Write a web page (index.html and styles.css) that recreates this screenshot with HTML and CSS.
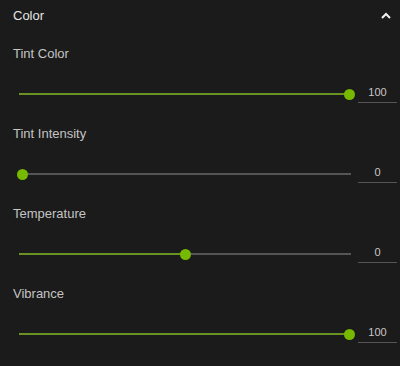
FILE: index.html
```html
<!DOCTYPE html>
<html lang="en">
<head>
    <meta charset="UTF-8">
    <title>Color</title>
    <link rel="stylesheet" href="styles.css">
</head>
<body>
    <div class="panel">
        <div class="panel-header">
            <span class="panel-title">Color</span>
            <svg class="chevron" width="10" height="7" viewBox="0 0 10 7">
                <polyline points="1,6 5,2 9,6" fill="none" stroke="#f0f0f0" stroke-width="2"/>
            </svg>
        </div>

        <div class="setting">
            <div class="label">Tint Color</div>
            <div class="slider-row">
                <div class="track"><div class="rail" style="--v: 100%"><div class="fill"></div><div class="thumb"></div></div></div>
                <div class="value">100</div>
            </div>
        </div>

        <div class="setting">
            <div class="label">Tint Intensity</div>
            <div class="slider-row">
                <div class="track"><div class="rail" style="--v: 0%"><div class="fill"></div><div class="thumb"></div></div></div>
                <div class="value">0</div>
            </div>
        </div>

        <div class="setting">
            <div class="label">Temperature</div>
            <div class="slider-row">
                <div class="track"><div class="rail" style="--v: 50%"><div class="fill"></div><div class="thumb"></div></div></div>
                <div class="value">0</div>
            </div>
        </div>

        <div class="setting">
            <div class="label">Vibrance</div>
            <div class="slider-row">
                <div class="track"><div class="rail" style="--v: 100%"><div class="fill"></div><div class="thumb"></div></div></div>
                <div class="value">100</div>
            </div>
        </div>
    </div>
</body>
</html>
```

FILE: styles.css
```css
html, body {
    margin: 0;
    background-color: #1b1b1b;
}
body {
    font-family: "Liberation Sans", Arial, sans-serif;
    width: 400px;
    height: 366px;
    overflow: hidden;
}
.panel-header {
    display: flex;
    justify-content: space-between;
    align-items: center;
    height: 31px;
    padding: 0 9px 0 13px;
    margin-bottom: 3px;
}
.panel-title {
    font-size: 13px;
    line-height: 31px;
    color: #e6e6e6;
}
.chevron {
    display: block;
    margin-top: -1px;
}
.label {
    font-size: 13px;
    line-height: 40px;
    color: #c4c4c4;
    padding-left: 13px;
}
.slider-row {
    display: flex;
    align-items: center;
    height: 40px;
    padding: 0 3px 0 19px;
    gap: 7px;
}
.track {
    flex: 1;
    height: 2px;
    background-color: #555;
    position: relative;
}
.rail {
    position: absolute;
    left: 3px;
    right: 2px;
    top: 0;
    height: 2px;
}
.fill {
    position: absolute;
    left: -3px;
    top: 0;
    height: 2px;
    width: calc(var(--v) + 3px);
    background-color: #6a9222;
}
.thumb {
    position: absolute;
    left: var(--v);
    top: 1px;
    width: 11px;
    height: 11px;
    margin: -5.5px 0 0 -5.5px;
    border-radius: 50%;
    background-color: #76b900;
}
.value {
    width: 39px;
    text-align: center;
    font-size: 11px;
    line-height: 15px;
    padding-bottom: 2px;
    border-bottom: 1px solid #555;
    color: #c8c8c8;
}
```
